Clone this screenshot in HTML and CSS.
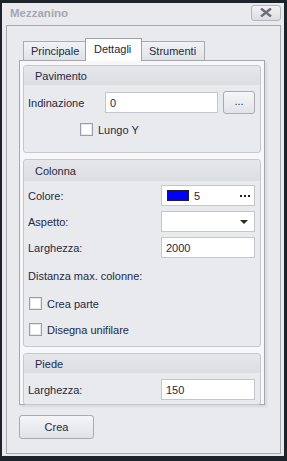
FILE: index.html
```html
<!DOCTYPE html>
<html lang="it">
<head>
    <meta charset="UTF-8">
    <title>Mezzanino</title>
    <link rel="stylesheet" href="styles.css">
</head>
<body>
    <div class="window">
        <div class="titlebar">
            <span class="title">Mezzanino</span>
            <button class="close">
                <svg width="12" height="9" viewBox="0 0 12 9"><path d="M1 0.5 L11 8.5 M11 0.5 L1 8.5" stroke="#6d7079" stroke-width="2.4"/></svg>
            </button>
        </div>
        <div class="frame">
            <div class="tabs">
                <div class="tab">Principale</div>
                <div class="tab active">Dettagli</div>
                <div class="tab">Strumenti</div>
            </div>
            <div class="panel">
                <div class="group g-pav">
                    <div class="group-head">Pavimento</div>
                    <div class="row r-incl">
                        <span class="label">Indinazione</span>
                        <div class="input in-incl">0</div>
                        <button class="dots-btn">...</button>
                    </div>
                    <label class="check c-lungo"><span class="box"></span>Lungo Y</label>
                </div>

                <div class="group g-col">
                    <div class="group-head">Colonna</div>
                    <div class="row">
                        <span class="label">Colore:</span>
                        <div class="input color">
                            <span class="swatch"></span>5
                            <svg class="more" width="10" height="2" viewBox="0 0 10 2"><rect x="0" width="2" height="2" fill="#222"/><rect x="4" width="2" height="2" fill="#222"/><rect x="8" width="2" height="2" fill="#222"/></svg>
                        </div>
                    </div>
                    <div class="row">
                        <span class="label">Aspetto:</span>
                        <div class="input combo"><span class="arrow"></span></div>
                    </div>
                    <div class="row">
                        <span class="label">Larghezza:</span>
                        <div class="input">2000</div>
                    </div>
                    <div class="text-row">Distanza max. colonne:</div>
                    <label class="check c-parte"><span class="box"></span>Crea parte</label>
                    <label class="check c-uni"><span class="box"></span>Disegna unifilare</label>
                </div>

                <div class="group g-piede">
                    <div class="group-head">Piede</div>
                    <div class="row">
                        <span class="label">Larghezza:</span>
                        <div class="input">150</div>
                    </div>
                </div>
            </div>
            <button class="btn-crea">Crea</button>
        </div>
    </div>
</body>
</html>
```

FILE: styles.css
```css
body { margin: 0; background: #1e232a; font-family: "Liberation Sans", Arial, sans-serif; font-size: 11px; color: #1e2944; }
.window { margin: 3px 3px 5px 2px; height: 453px; background: #e9eaee; display: flex; flex-direction: column; }
.titlebar { height: 22px; display: flex; align-items: center; justify-content: space-between; padding: 0 3px 0 8px; box-sizing: border-box; }
.title { font-weight: bold; font-size: 11.5px; color: #a4a7ae; margin-top: -2px; }
.close { width: 30px; height: 16px; margin-top: -3px; border: 1px solid #b3b5bb; border-radius: 3px; background: linear-gradient(#f2f3f5, #dcdde2); display: flex; align-items: center; justify-content: center; padding: 0; }
.frame { flex: 1; margin: 0 3px 2px 4px; border: 1px solid #a7a9af; padding: 12px 15px 0 12px; }

.tabs { display: flex; align-items: flex-end; height: 22px; padding-left: 4px; }
.tab { height: 19px; box-sizing: border-box; padding: 0 0 0 7px; border: 1px solid #a9abb1; border-bottom: none; background: linear-gradient(#f1f2f4, #e1e2e6); display: flex; align-items: center; margin-right: -1px; }
.tab:first-child { width: 63px; }
.tab.active { height: 23px; width: 57px; padding-left: 8px; background: #fff; border-color: #9fa1a8; position: relative; z-index: 1; margin-bottom: -1px; padding-bottom: 3px; }
.tab:last-child { width: 64px; }

.panel { border: 1px solid #a5a7ad; background: #f7f7f9; padding: 4px 3px 0 3px; height: 345px; box-sizing: border-box; box-shadow: 2px 2px 2px rgba(0,0,0,0.08); }
.group { border: 1px solid #c6c8ce; border-radius: 3px; background: #e9eaee; margin-bottom: 6px; position: relative; }
.group-head { height: 19px; background: linear-gradient(#e6e7eb, #dcdde1); padding-left: 11px; display: flex; align-items: center; border-radius: 3px 3px 0 0; }
.g-pav { height: 88px; box-sizing: border-box; }
.g-col { height: 188px; box-sizing: border-box; }
.g-col .group-head { height: 21px; }
.g-piede { height: 52px; box-sizing: border-box; margin-bottom: 0; }

.row { display: flex; align-items: center; height: 21px; padding-left: 4px; margin-top: 5px; }
.g-pav .row { margin-top: 7px; }
.g-col .row:nth-child(2) { margin-top: 4px; }
.g-piede .row { margin-top: 6px; }
.label { flex: 1; }
.input { width: 94px; height: 21px; box-sizing: border-box; border: 1px solid #c4c6cc; background: #fff; margin-right: 5px; display: flex; align-items: center; padding-left: 4px; }
.in-incl { width: 113px; height: 21px; margin-right: 5px; }
.r-incl .label { flex: none; width: 77px; }
.dots-btn { width: 32px; height: 23px; border: 1px solid #a9abb1; border-radius: 3px; background: linear-gradient(#f6f6f8, #e2e3e7); font-family: inherit; font-size: 11px; color: #1e2944; padding: 0 0 4px; margin-right: 5px; }

.color { padding-left: 5px; }
.swatch { width: 20px; height: 9px; background: #0000ff; border: 1px solid #1a1a3a; margin-right: 5px; }
.more { margin-left: auto; margin-right: 4px; }
.combo { justify-content: flex-end; }
.arrow { width: 0; height: 0; border-left: 4px solid transparent; border-right: 4px solid transparent; border-top: 4px solid #2a2a2a; margin-right: 6px; }

.text-row { padding-left: 4px; margin-top: 12px; }
.check { display: flex; align-items: center; }
.box { width: 11px; height: 11px; border: 1px solid #9c9ea5; background: #fff; margin-right: 5px; box-shadow: inset 0 0 0 1px #e6e7ea; }
.c-lungo { margin: 10px 0 0 56px; }
.c-parte { margin: 15px 0 0 5px; }
.c-uni { margin: 13px 0 0 5px; }

.btn-crea { margin-top: 10px; width: 75px; height: 24px; border: 1px solid #a9abb1; border-radius: 3px; background: linear-gradient(#f4f5f7, #e1e2e6); font-family: inherit; font-size: 11px; color: #1e2944; }
```
